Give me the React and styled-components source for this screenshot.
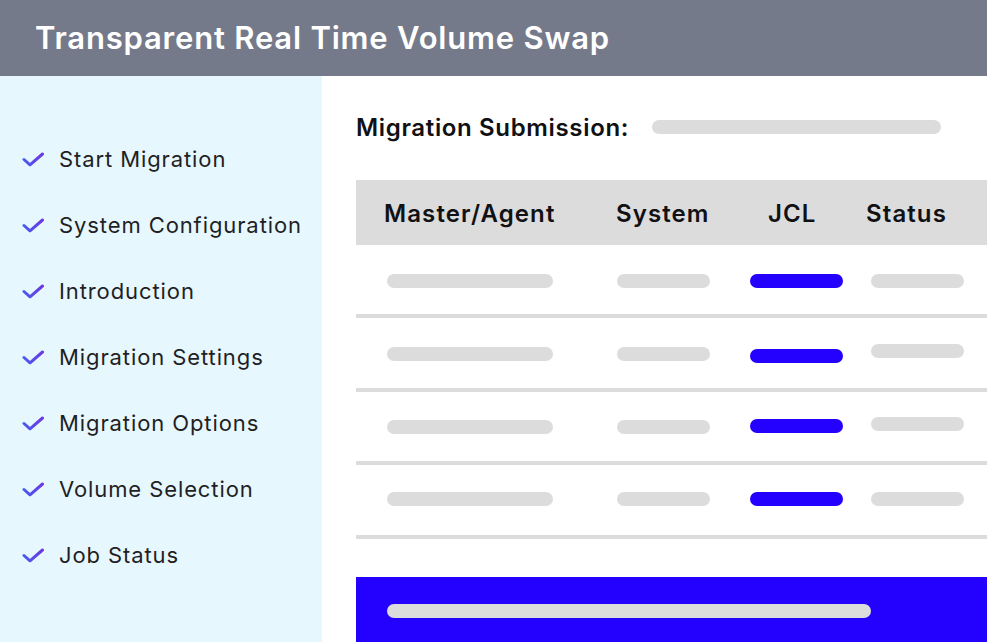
import React from 'react';
import styled, { createGlobalStyle } from 'styled-components';

const GlobalStyle = createGlobalStyle`
  html, body {
    margin: 0;
    padding: 0;
    background: #ffffff;
    font-family: 'Inter', 'Noto Sans', sans-serif;
  }
  * { box-sizing: border-box; }
`;

const Page = styled.div`
  width: 987px;
  height: 642px;
  overflow: hidden;
  display: flex;
  flex-direction: column;
`;

const TitleBar = styled.header`
  height: 76px;
  flex-shrink: 0;
  background: #757a8b;
  display: flex;
  align-items: center;
  padding-left: 35px;
  padding-bottom: 2px;
`;

const Title = styled.h1`
  margin: 0;
  color: #ffffff;
  font-size: 31px;
  font-weight: 600;
  letter-spacing: 0.8px;
`;

const Body = styled.div`
  flex: 1;
  display: flex;
  min-height: 0;
`;

const Sidebar = styled.nav`
  width: 322px;
  flex-shrink: 0;
  background: #e7f7fe;
  padding-top: 50px;
  display: flex;
  flex-direction: column;
`;

const Step = styled.div`
  height: 66px;
  display: flex;
  align-items: center;
  padding-left: 22px;
  gap: 15px;
  font-size: 22px;
  color: #1f1f24;
  letter-spacing: 0.9px;
`;

const Main = styled.main`
  flex: 1;
  padding-left: 34px;
  display: flex;
  flex-direction: column;
`;

const Submission = styled.div`
  height: 104px;
  display: flex;
  align-items: center;
  gap: 23px;
  padding-bottom: 2px;
`;

const Label = styled.span`
  font-size: 24px;
  font-weight: 600;
  color: #111114;
  letter-spacing: 0.65px;
`;

const Bar = styled.div`
  height: 14px;
  width: ${({ $w }) => $w}px;
  margin-top: ${({ $top = 0 }) => $top}px;
  border-radius: 7px;
  background: ${({ $blue }) => ($blue ? '#2400ff' : '#dcdcdc')};
`;

const TableHead = styled.div`
  height: 65px;
  background: #dcdcdc;
  display: grid;
  grid-template-columns: 232px 152px 98px 1fr;
  align-items: center;
  padding-left: 28px;
  padding-top: 2px;
`;

const HeadCell = styled.div`
  font-size: 24px;
  font-weight: 600;
  color: #111114;
  letter-spacing: 1.1px;
`;

const Row = styled.div`
  height: 73.4px;
  border-bottom: 4px solid #dcdcdc;
  display: grid;
  grid-template-columns: 230px 133px 121px 1fr;
  align-items: start;
  padding-left: 31px;
`;

const Footer = styled.div`
  margin-top: 38px;
  flex: 1;
  background: #2400ff;
  padding: 27px 0 0 31px;
`;

const Check = () => (
  <svg width="22" height="15" viewBox="0 0 22 15" fill="none">
    <defs>
      <linearGradient id="tick" x1="0" y1="0" x2="1" y2="0">
        <stop offset="0" stopColor="#4a5af2" />
        <stop offset="1" stopColor="#6b3ae0" />
      </linearGradient>
    </defs>
    <path
      d="M2 7.5 L8 12.8 L20.5 2"
      stroke="url(#tick)"
      strokeWidth="3"
      strokeLinecap="round"
      strokeLinejoin="round"
    />
  </svg>
);

const steps = [
  'Start Migration',
  'System Configuration',
  'Introduction',
  'Migration Settings',
  'Migration Options',
  'Volume Selection',
  'Job Status',
];

// per-row vertical offsets of the placeholder bars: [agent, system, jcl, status]
const rows = [
  [29, 29, 29, 29],
  [29, 29, 31, 26],
  [28, 28, 27, 25],
  [27, 27, 27, 27],
];

export default function App() {
  return (
    <>
      <GlobalStyle />
      <Page>
        <TitleBar>
          <Title>Transparent Real Time Volume Swap</Title>
        </TitleBar>
        <Body>
          <Sidebar>
            {steps.map((s) => (
              <Step key={s}>
                <Check />
                {s}
              </Step>
            ))}
          </Sidebar>
          <Main>
            <Submission>
              <Label>Migration Submission:</Label>
              <Bar $w={289} />
            </Submission>
            <TableHead>
              <HeadCell>Master/Agent</HeadCell>
              <HeadCell>System</HeadCell>
              <HeadCell>JCL</HeadCell>
              <HeadCell>Status</HeadCell>
            </TableHead>
            {rows.map((r, i) => (
              <Row key={i}>
                <Bar $w={166} $top={r[0]} />
                <Bar $w={93} $top={r[1]} />
                <Bar $w={93} $top={r[2]} $blue />
                <Bar $w={93} $top={r[3]} />
              </Row>
            ))}
            <Footer>
              <Bar $w={484} />
            </Footer>
          </Main>
        </Body>
      </Page>
    </>
  );
}
